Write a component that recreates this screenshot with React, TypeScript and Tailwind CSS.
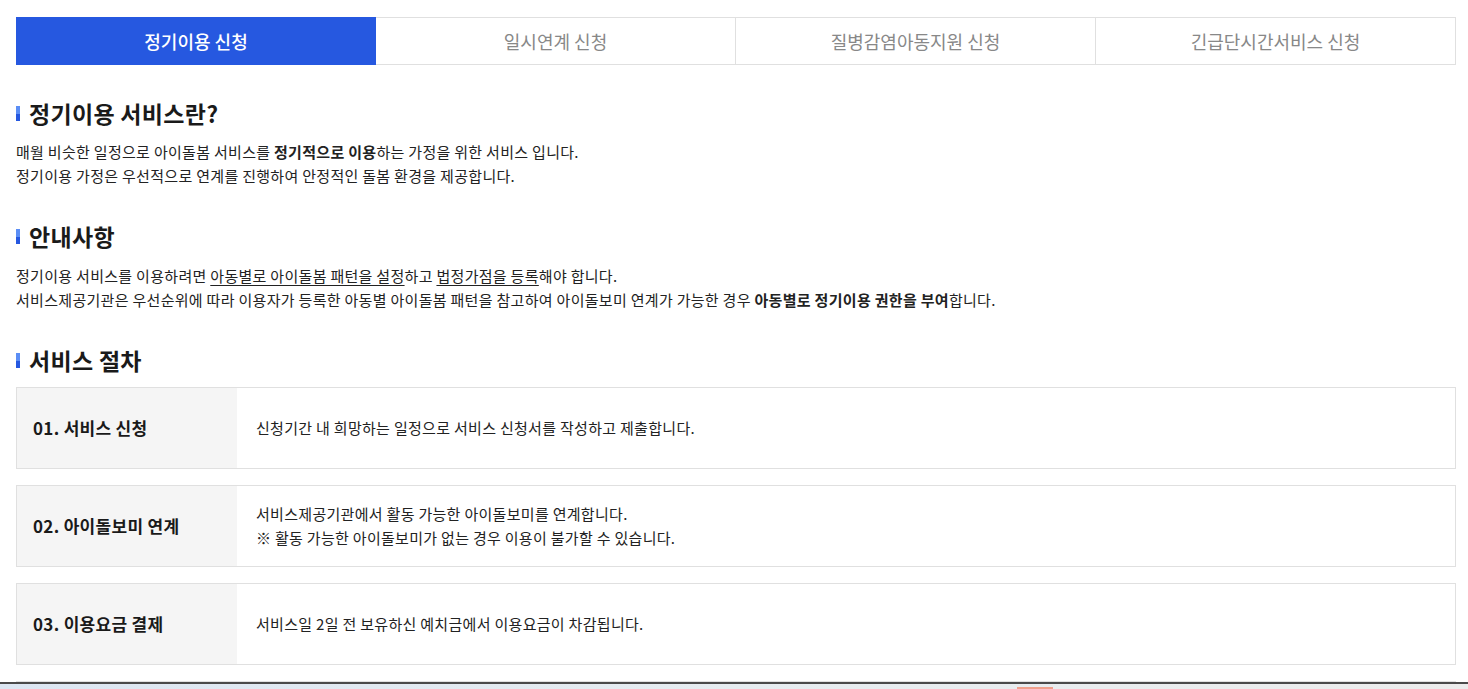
import React from 'react'

const TABS = ['정기이용 신청', '일시연계 신청', '질병감염아동지원 신청', '긴급단시간서비스 신청']

const STEPS: { title: string; lines: string[] }[] = [
  { title: '01. 서비스 신청', lines: ['신청기간 내 희망하는 일정으로 서비스 신청서를 작성하고 제출합니다.'] },
  {
    title: '02. 아이돌보미 연계',
    lines: ['서비스제공기관에서 활동 가능한 아이돌보미를 연계합니다.', '※ 활동 가능한 아이돌보미가 없는 경우 이용이 불가할 수 있습니다.'],
  },
  { title: '03. 이용요금 결제', lines: ['서비스일 2일 전 보유하신 예치금에서 이용요금이 차감됩니다.'] },
  // next card only peeks in at the bottom edge
  { title: '', lines: [] },
]

function Heading({ children, className = '' }: { children: React.ReactNode; className?: string }) {
  return (
    <h2 className={`flex items-center gap-[9px] h-[30px] pb-[3px] text-[23px] font-bold text-[#1a1a1a] tracking-[0.3px] ${className}`}>
      <span className="w-[4px] h-[15px] flex flex-col shrink-0">
        <span className="h-1/2 bg-[#5b8ef5]" />
        <span className="h-1/2 bg-[#2658e0]" />
      </span>
      {children}
    </h2>
  )
}

export default function App() {
  return (
    <div className="relative w-[1468px] h-[689px] overflow-hidden bg-white text-[#222] font-['Noto_Sans_CJK_KR','Noto_Sans',sans-serif]">
      <div className="pl-[16px] pr-[12px] pt-[17px]">
        {/* Tabs */}
        <div className="grid grid-cols-4 h-[48px]">
          {TABS.map((t, i) => (
            <div
              key={t}
              className={`flex items-center justify-center text-[18px] ${
                i === 0
                  ? 'bg-[#2658e0] text-white font-medium'
                  : 'border-y border-r border-[#e0e0e0] text-[#888]'
              }`}
            >
              {t}
            </div>
          ))}
        </div>

        <Heading className="mt-[35px]">정기이용 서비스란?</Heading>
        <div className="mt-[10px] text-[15px] leading-[24px] tracking-[0.3px]">
          <p>
            매월 비슷한 일정으로 아이돌봄 서비스를 <b className="font-bold">정기적으로 이용</b>하는 가정을 위한 서비스 입니다.
          </p>
          <p>정기이용 가정은 우선적으로 연계를 진행하여 안정적인 돌봄 환경을 제공합니다.</p>
        </div>

        <Heading className="mt-[35px]">안내사항</Heading>
        <div className="mt-[11px] text-[15px] leading-[24px] tracking-[0.3px]">
          <p>
            정기이용 서비스를 이용하려면 <span className="underline underline-offset-[3px]">아동별로 아이돌봄 패턴을 설정</span>하고{' '}
            <span className="underline underline-offset-[3px]">법정가점을 등록</span>해야 합니다.
          </p>
          <p>
            서비스제공기관은 우선순위에 따라 이용자가 등록한 아동별 아이돌봄 패턴을 참고하여 아이돌보미 연계가 가능한 경우{' '}
            <b className="font-bold">아동별로 정기이용 권한을 부여</b>합니다.
          </p>
        </div>

        <Heading className="mt-[35px]">서비스 절차</Heading>
        <div className="mt-[10px] flex flex-col gap-[16px]">
          {STEPS.map((s, idx) => (
            <div key={idx} className="flex h-[82px] border border-[#e0e0e0] shrink-0">
              <div className="w-[220px] shrink-0 bg-[#f5f5f5] flex items-center pl-[16px] text-[17px] font-bold tracking-[0.3px] text-[#1a1a1a]">
                {s.title}
              </div>
              <div className="flex flex-col justify-center pl-[19px] text-[15px] leading-[24px] tracking-[0.3px]">
                {s.lines.map((l, i) => (
                  <p key={i}>{l}</p>
                ))}
              </div>
            </div>
          ))}
        </div>
      </div>

      {/* window taskbar strip over the page bottom */}
      <div className="absolute left-0 right-0 bottom-0 h-[7px] border-t-2 border-[#4a4a4a] bg-gradient-to-r from-[#dce6f2] via-[#e6ecf0] to-[#ececec]">
        <span className="absolute left-[1017px] bottom-0 w-[36px] h-[2px] bg-[#f0a08c]" />
      </div>
    </div>
  )
}
